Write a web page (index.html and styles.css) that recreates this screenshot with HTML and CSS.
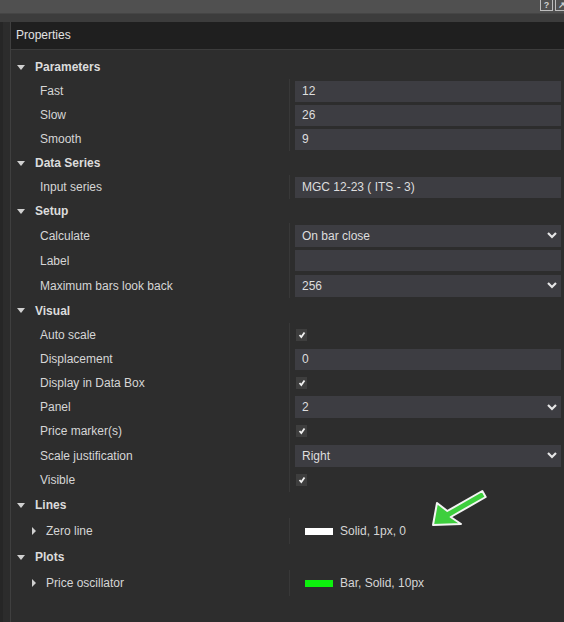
FILE: index.html
```html
<!DOCTYPE html>
<html lang="en">

<head>
    <meta charset="UTF-8">
    <title>Properties</title>
    <link rel="stylesheet" href="styles.css">
</head>

<body>
    <div class="titlebar">
        <span class="tb-btn">?</span>
        <span class="tb-btn">&#8599;</span>
    </div>
    <div class="strip"></div>

    <div class="outer">
        <div class="panel">
            <div class="panel-head">Properties</div>

            <div class="grid">
                <div class="cat"><span class="tri-down"></span>Parameters</div>
                <div class="row">
                    <div class="label">Fast</div>
                    <div class="value"><div class="box">12</div></div>
                </div>
                <div class="row">
                    <div class="label">Slow</div>
                    <div class="value"><div class="box">26</div></div>
                </div>
                <div class="row">
                    <div class="label">Smooth</div>
                    <div class="value"><div class="box">9</div></div>
                </div>

                <div class="cat"><span class="tri-down"></span>Data Series</div>
                <div class="row">
                    <div class="label">Input series</div>
                    <div class="value"><div class="box">MGC 12-23 ( ITS - 3)</div></div>
                </div>

                <div class="cat"><span class="tri-down"></span>Setup</div>
                <div class="row tall">
                    <div class="label">Calculate</div>
                    <div class="value"><div class="box select">On bar close<svg class="chev" viewBox="0 0 10 7"><polyline points="1,1 5,5 9,1" /></svg></div></div>
                </div>
                <div class="row tall">
                    <div class="label">Label</div>
                    <div class="value"><div class="box"></div></div>
                </div>
                <div class="row tall">
                    <div class="label">Maximum bars look back</div>
                    <div class="value"><div class="box select">256<svg class="chev" viewBox="0 0 10 7"><polyline points="1,1 5,5 9,1" /></svg></div></div>
                </div>

                <div class="cat tall-cat"><span class="tri-down"></span>Visual</div>
                <div class="row">
                    <div class="label">Auto scale</div>
                    <div class="value"><span class="check"><svg viewBox="0 0 8 8"><polyline points="1.5,4 3.3,6 6.5,1.5" /></svg></span></div>
                </div>
                <div class="row">
                    <div class="label">Displacement</div>
                    <div class="value"><div class="box">0</div></div>
                </div>
                <div class="row">
                    <div class="label">Display in Data Box</div>
                    <div class="value"><span class="check"><svg viewBox="0 0 8 8"><polyline points="1.5,4 3.3,6 6.5,1.5" /></svg></span></div>
                </div>
                <div class="row">
                    <div class="label">Panel</div>
                    <div class="value"><div class="box select">2<svg class="chev" viewBox="0 0 10 7"><polyline points="1,1 5,5 9,1" /></svg></div></div>
                </div>
                <div class="row">
                    <div class="label">Price marker(s)</div>
                    <div class="value"><span class="check"><svg viewBox="0 0 8 8"><polyline points="1.5,4 3.3,6 6.5,1.5" /></svg></span></div>
                </div>
                <div class="row tall">
                    <div class="label">Scale justification</div>
                    <div class="value"><div class="box select">Right<svg class="chev" viewBox="0 0 10 7"><polyline points="1,1 5,5 9,1" /></svg></div></div>
                </div>
                <div class="row">
                    <div class="label">Visible</div>
                    <div class="value"><span class="check"><svg viewBox="0 0 8 8"><polyline points="1.5,4 3.3,6 6.5,1.5" /></svg></span></div>
                </div>

                <div class="cat group-cat"><span class="tri-down"></span>Lines</div>
                <div class="row sub">
                    <div class="label"><span class="tri-right"></span>Zero line</div>
                    <div class="value"><span class="swatch white"></span>Solid, 1px, 0</div>
                </div>

                <div class="cat group-cat"><span class="tri-down"></span>Plots</div>
                <div class="row sub">
                    <div class="label"><span class="tri-right"></span>Price oscillator</div>
                    <div class="value"><span class="swatch green"></span>Bar, Solid, 10px</div>
                </div>
            </div>
        </div>
    </div>

    <!-- annotation arrow -->
    <svg class="arrow" width="64" height="46" viewBox="0 0 64 46">
        <polygon points="5,38 9,16 19.3,24 54.3,4 57.7,10 22.7,30 33,37" />
    </svg>
</body>

</html>
```

FILE: styles.css
```css
body {
    margin: 0;
    padding: 0;
    background-color: #2c2c2c;
    font-family: "Liberation Sans", Arial, sans-serif;
    font-size: 12px;
    color: #d6d6d6;
    overflow: hidden;
    height: 622px;
    position: relative;
}

.titlebar {
    height: 13px;
    background-color: #505050;
    display: flex;
    justify-content: flex-end;
    gap: 2px;
    margin-right: -4px;
}

.tb-btn {
    width: 11px;
    height: 10px;
    border: 1px solid #bdbdbd;
    border-top: none;
    color: #cfcfcf;
    font-size: 9px;
    line-height: 10px;
    text-align: center;
    font-weight: bold;
}

.strip {
    height: 9px;
    background-color: #3c3c3c;
    border-top: 1px solid #454545;
    box-sizing: border-box;
}

.outer {
    padding-left: 10px;
    border-left: 3px solid #262626;
}

.panel {
    border-left: 1px solid #3f3f3f;
    background-color: #2d2d2d;
    margin-left: -3px;
    height: 600px;
}

.panel-head {
    height: 27px;
    line-height: 27px;
    background-color: #1f1f1f;
    border-bottom: 1px solid #3c3c3c;
    padding-left: 5px;
    color: #e2e2e2;
}

.grid {
    padding-top: 5px;
}

/* category headers */
.cat {
    height: 24px;
    display: flex;
    align-items: center;
    padding-left: 6px;
    font-weight: bold;
    color: #dcdcdc;
}

.tall-cat {
    height: 25px;
}

.group-cat {
    height: 26px;
}

.tri-down {
    width: 0;
    height: 0;
    border-left: 4px solid transparent;
    border-right: 4px solid transparent;
    border-top: 5px solid #d0d0d0;
    margin-right: 10px;
}

.tri-right {
    width: 0;
    height: 0;
    border-top: 4px solid transparent;
    border-bottom: 4px solid transparent;
    border-left: 4px solid #d0d0d0;
    margin-right: 10px;
}

/* property rows */
.row {
    height: 24px;
    display: flex;
}

.row.tall {
    height: 25px;
}

.row.sub {
    height: 26px;
}

.label {
    width: 278px;
    padding-left: 29px;
    box-sizing: border-box;
    display: flex;
    align-items: center;
}

.sub .label {
    padding-left: 21px;
}

.value {
    flex: 1;
    border-left: 1px solid #383838;
    padding: 0 3px 0 5px;
    display: flex;
    align-items: center;
}

.box {
    flex: 1;
    height: 21px;
    background-color: #3d3d42;
    padding-left: 7px;
    display: flex;
    align-items: center;
    justify-content: space-between;
    color: #dedede;
}

.box.select {
    height: 22px;
    padding-right: 4px;
}

.chev {
    width: 10px;
    height: 7px;
    fill: none;
    stroke: #e6e6e6;
    stroke-width: 2.2;
}

.check {
    width: 11px;
    height: 12px;
    background-color: #3e3e3e;
    display: flex;
    align-items: center;
    justify-content: center;
    margin-left: 1px;
}

.check svg {
    width: 8px;
    height: 8px;
    fill: none;
    stroke: #f0f0f0;
    stroke-width: 1.8;
}

.swatch {
    width: 28px;
    height: 7px;
    margin: 0 7px 0 10px;
}

.swatch.white {
    background-color: #ffffff;
}

.swatch.green {
    background-color: #0df00d;
}

/* green pointer drawn over the list */
.arrow {
    position: absolute;
    left: 428px;
    top: 487px;
}

.arrow polygon {
    fill: #3dcf3d;
    stroke: #f4f4f4;
    stroke-width: 2;
    stroke-linejoin: round;
}
```
